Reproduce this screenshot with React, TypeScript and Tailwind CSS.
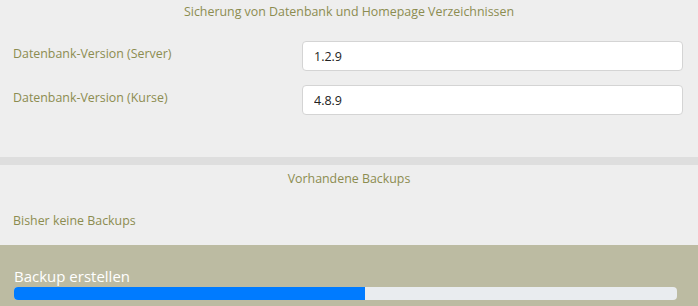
import React from "react";

const olive = "text-[#8c8c50]";

const VersionRow = ({ label, value }: { label: string; value: string }) => (
  <div className="flex items-start">
    <div className={`w-[302px] pl-[13px] pt-[3px] leading-[20px] ${olive}`}>{label}</div>
    <input
      readOnly
      value={value}
      className="h-[30px] w-[381px] rounded-[4px] border border-[#d4d4d4] bg-white px-[11px] text-[12.5px] text-[#222] outline-none"
    />
  </div>
);

const App = () => {
  return (
    <div
      className="h-[306px] w-[698px] overflow-hidden bg-[#eeeeee] text-[12.4px]"
      style={{ fontFamily: '"Open Sans", "Noto Sans", sans-serif' }}
    >
      <section className="h-[157px] pt-[3px]">
        <h2 className={`text-center leading-[18px] ${olive}`}>
          Sicherung von Datenbank und Homepage Verzeichnissen
        </h2>
        <div className="mt-[20px] flex flex-col gap-[14px]">
          <VersionRow label="Datenbank-Version (Server)" value="1.2.9" />
          <VersionRow label="Datenbank-Version (Kurse)" value="4.8.9" />
        </div>
      </section>

      <div className="h-[8px] bg-[#dedede]" />

      <section className="h-[80px] pt-[5px]">
        <h2 className={`text-center leading-[18px] ${olive}`}>Vorhandene Backups</h2>
        <p className={`mt-[24px] pl-[13px] leading-[18px] ${olive}`}>Bisher keine Backups</p>
      </section>

      <footer className="h-[61px] bg-[#bcbba2] px-[14px] pt-[20px]">
        <div className="text-[15px] leading-[22px] text-white">Backup erstellen</div>
        <div className="flex h-[13px] w-[663px] overflow-hidden rounded-[4px] bg-[#e9ecef]">
          <div className="h-full w-[53%] bg-[#007bff]" />
        </div>
      </footer>
    </div>
  );
};

export default App;
